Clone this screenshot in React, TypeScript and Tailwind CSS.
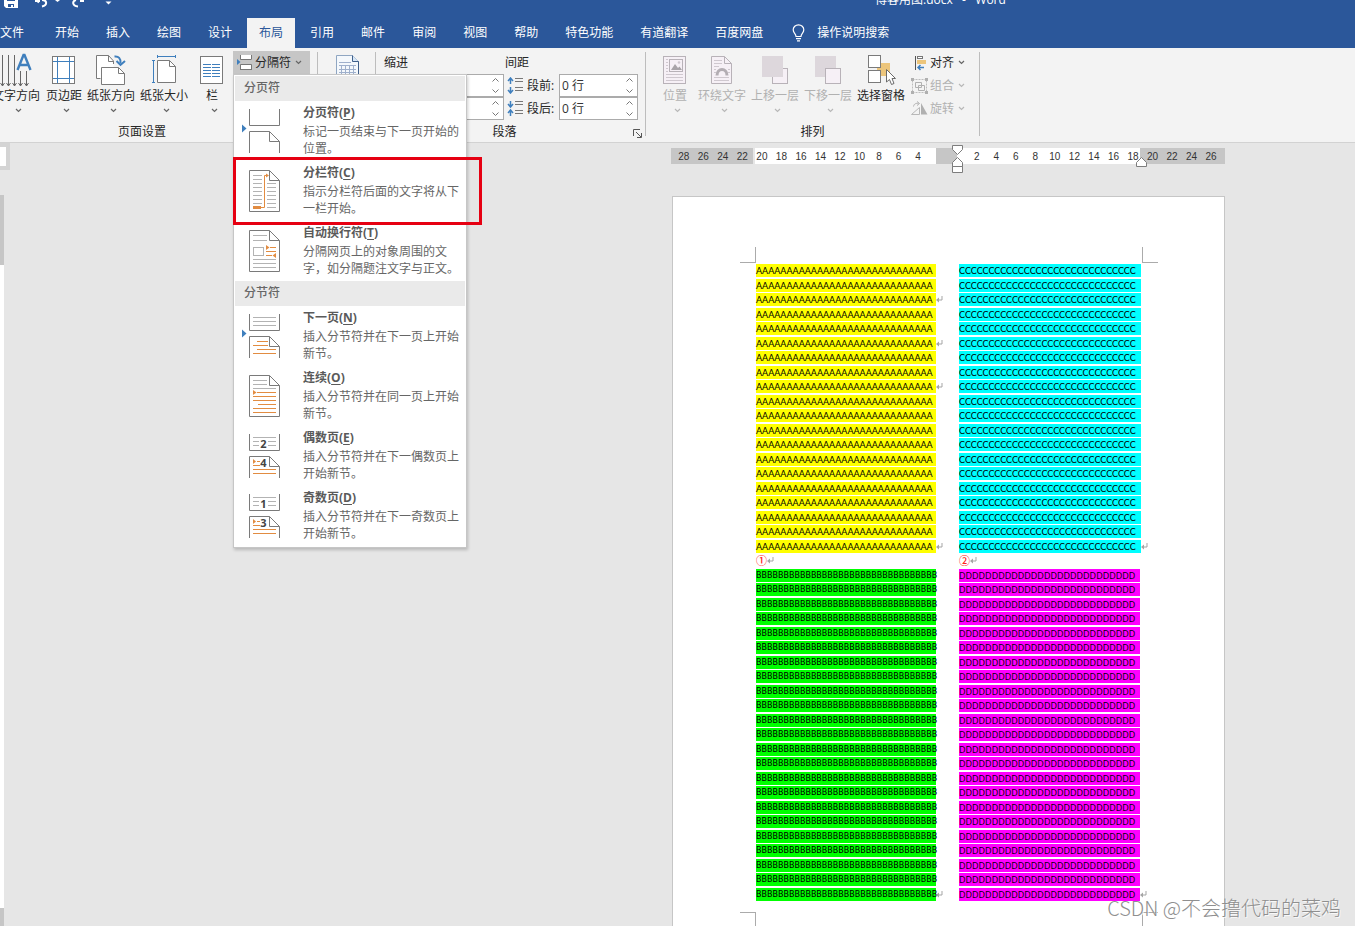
import React from "react";

const tabs = ["文件", "开始", "插入", "绘图", "设计", "布局", "引用", "邮件", "审阅", "视图", "帮助", "特色功能", "有道翻译", "百度网盘"];

const INK = "#7a7a7a";
const PALE = "#b8b2b8";
const BLUE = "#3f7fbd";
const ORANGE = "#e28c41";

function Chevron({ pale = false }: { pale?: boolean }) {
  return (
    <svg width="7" height="5" viewBox="0 0 7 5" fill="none" stroke={pale ? "#b8b8b8" : "#666"} strokeWidth="1.2" aria-hidden="true">
      <path d="M1 1l2.5 2.5L6 1" />
    </svg>
  );
}

function Svg({ w = 34, h = 34, children }: { w?: number; h?: number; children: React.ReactNode }) {
  return (
    <svg width={w} height={h} viewBox={`0 0 ${w} ${h}`} fill="none" aria-hidden="true" className="shrink-0">
      {children}
    </svg>
  );
}

/* ---------- large ribbon icons ---------- */

const TextDirectionIcon = () => (
  <Svg>
    <path d="M3.5 2v31M9.5 2v31M15.5 2v31M21.5 18v15M27.5 18v15" stroke="#666" />
    <path d="M1.500 30l2 3 2-3M7.500 30l2 3 2-3M13.500 30l2 3 2-3M19.500 30l2 3 2-3M25.500 30l2 3 2-3" stroke="#666" />
    <path d="M18.500 17L24.500 2h1L31.500 17M20.500 12h9" stroke={BLUE} strokeWidth="2.400" />
  </Svg>
);
const MarginsIcon = () => (
  <Svg>
    <rect x="5.5" y="3.5" width="22" height="27" fill="#fff" stroke={INK} />
    <path d="M10.5 4v26M22.5 4v26M6 8.5h21M6 25.5h21" stroke={BLUE} />
  </Svg>
);
const OrientationIcon = () => (
  <Svg>
    <path d="M6 25.500H2.500v-23h12l5 6V14H7.500v11.500z" fill="#fff" />
    <path d="M6.500 25.500h-4v-23h12l5 5.500v3M14.500 2.500v6h5" stroke={INK} />
    <path d="M7.500 14.500h17l6 6v11h-23z" fill="#fff" stroke={INK} />
    <path d="M24.500 14.500v6h6" stroke={INK} />
    <path d="M20.500 3.500c4-.5 6.500 2 6 7" stroke={BLUE} strokeWidth="2" />
    <path d="M22.500 8l4 4 4.500-4" stroke={BLUE} strokeWidth="2" />
  </Svg>
);
const SizeIcon = () => (
  <Svg>
    <path d="M10.500 7.500h12l6 6v16h-18z" fill="#fff" stroke={INK} />
    <path d="M22.500 7.500v6h6" stroke={INK} />
    <path d="M10.500 3.500h18M10.500 2v3M28.500 2v3M6.500 7.500v22M5 7.500h3M5 29.500h3" stroke={BLUE} />
  </Svg>
);
const ColumnsIcon = () => (
  <Svg>
    <rect x="5.500" y="3.500" width="22" height="27" fill="#fff" stroke={INK} />
    <path d="M8 11.500h8M8 14.500h8M8 17.500h8M8 20.500h8M8 23.500h8M17 11.500h8M17 14.500h8M17 17.500h8M17 20.500h8M17 23.500h8" stroke={BLUE} />
  </Svg>
);
const ManuscriptIcon = () => (
  <svg width="24" height="30" viewBox="0 0 24 30" fill="none" aria-hidden="true">
    <path d="M.5.5h16l6 6V30H.5z" fill="#f4f8fc" stroke="#8fa6c2" />
    <path d="M16.500.5v6h6" fill="#d7e6f5" stroke="#3f5f8a" />
    <path d="M22.500 6.500V30" stroke="#3f5f8a" />
    <path d="M3 7.500h12M3 10.500h17M3 14.500h17M3 17.500h17M3 21.500h17M3 24.500h17M5.500 10v20M9.500 10v20M13.500 10v20M17.500 10v20" stroke="#9fb0cc" />
  </svg>
);
const PositionIcon = () => (
  <Svg>
    <rect x="5.500" y="3.500" width="22" height="27" fill="#f6f0f6" stroke={PALE} />
    <path d="M8 6.500h2M8 9.500h2M8 12.500h2M8 15.500h2M8 18.500h2M8 21.500h17M8 24.500h17M8 27.500h17" stroke="#cfc8cf" />
    <rect x="11.500" y="6.500" width="13" height="12" fill="#f6f0f6" stroke={PALE} />
    <path d="M13 17l4-6 3 4 1.500-1.500L24 17z" fill="#a9a4a9" />
    <circle cx="21" cy="9.500" r="1.300" fill="#cfc8cf" />
  </Svg>
);
const WrapIcon = () => (
  <Svg>
    <path d="M6.500 3.500h13l7 7v20h-20z" fill="#f6f0f6" stroke={PALE} />
    <path d="M19.500 3.500v7h7" stroke={PALE} />
    <path d="M9 7.500h8M9 10.500h8M9 13.500h5M9 16.500h2M23 16.500h2M9 19.500h2M23 19.500h2M9 24.500h15M9 27.500h15" stroke="#cfc8cf" />
    <path d="M12 22.500c0-8 10-8 10 0" stroke="#b3adb3" strokeWidth="3" />
  </Svg>
);
const ForwardIcon = () => (
  <Svg>
    <rect x="14.500" y="15.500" width="15" height="15" fill="#f6f0f6" stroke={PALE} />
    <path d="M4 3h21v21H4z" fill="#ddd7dc" />
  </Svg>
);
const BackwardIcon = () => (
  <Svg>
    <path d="M4 3h21v21H4z" fill="#ddd7dc" />
    <rect x="14.500" y="15.500" width="15" height="15" fill="#f6f0f6" stroke={PALE} />
  </Svg>
);
const SelectionPaneIcon = () => (
  <Svg>
    <path d="M13 10h13v13H13z" fill="#ecc57b" />
    <rect x="4.500" y="2.500" width="12" height="12" fill="#fff" stroke={INK} />
    <rect x="4.500" y="17.500" width="12" height="12" fill="#fff" stroke={INK} />
    <path d="M22.500 16.500v12.500l3-2.500 2 5 2.500-1-2-5h3.500z" fill="#fff" stroke="#6a6a6a" />
  </Svg>
);

/* ---------- small ribbon icons ---------- */

const BreaksIcon = () => (
  <Svg w={18} h={18}>
    <path d="M5 1h11v5H5zM5 11h11v5H5z" fill="#fff" />
    <path d="M4.500 1v4.500h11V1M4.500 16v-5.500h11V16M5 15.500h11" stroke="#777" />
    <path d="M1 5l3.500 3L1 11z" fill={BLUE} />
  </Svg>
);
const SpaceBeforeIcon = () => (
  <Svg w={16} h={17}>
    <path d="M3.500 1v6M1 4l2.500-3L6 4M3.500 10v6M1 13l2.500 3L6 13" stroke={BLUE} strokeWidth="1.500" />
    <path d="M8 1.500h8M8 4.500h8M8 10.500h8M8 13.500h8" stroke="#777" />
  </Svg>
);
const SpaceAfterIcon = () => (
  <Svg w={16} h={17}>
    <path d="M3.500 1v6M1 4l2.500 3L6 4M3.500 10v6M1 13l2.500-3L6 13" stroke={BLUE} strokeWidth="1.500" />
    <path d="M8 1.500h8M8 4.500h8M8 10.500h8M8 13.500h8" stroke="#777" />
  </Svg>
);
const AlignIcon = () => (
  <Svg w={19} h={16}>
    <path d="M4.500 1v14" stroke="#555" />
    <rect x="6.500" y="1.500" width="5" height="2" fill="#fff" stroke="#777" />
    <path d="M6 5h9v4H6z" fill="#ecc57b" />
    <path d="M13 12.500H7M9.500 10L7 12.500 9.500 15" stroke={BLUE} strokeWidth="1.500" />
  </Svg>
);
const GroupIcon = () => (
  <Svg w={19} h={16}>
    <path d="M1.500 1.500h14v13h-14z" stroke="#bdbdbd" strokeDasharray="2 1" />
    <path d="M4.500 4.500h6v5h-6zM7.500 7.500h6v5h-6z" fill="#f3f3f3" stroke="#b0b0b0" />
    <path d="M0 0h3v3H0zM14 0h3v3h-3zM0 13h3v3H0zM14 13h3v3h-3z" fill="#b0b0b0" />
  </Svg>
);
const RotateIcon = () => (
  <Svg w={19} h={16}>
    <path d="M10 2l6.500 11.500H10z" fill="#b0b0b0" />
    <path d="M8.500 6.500v7h-8z" stroke="#b8b8b8" />
    <path d="M2.500 5.500c.5-3 3-3.500 5-3M6 .5l2.500 2L6 4.500" stroke="#b0b0b0" />
  </Svg>
);

/* ---------- break menu icons, 68 x 60 cells ---------- */

const FullPage = () => (
  <>
    <path d="M14.500 9.500h20l10 10v31h-30z" fill="#fff" stroke={INK} />
    <path d="M34.500 9.500v10h10" stroke={INK} />
  </>
);
const SplitPages = () => <path d="M14.500 8v16.500h30V8M14.500 52V30.500h20l10 10V52M34.500 30.500v10h10" stroke={INK} />;
const Pointer = () => <path d="M7 23.500l4.500 4-4.500 4z" fill={BLUE} />;

const PageBreakIcon = () => (
  <Svg w={68} h={60}><SplitPages /><Pointer /></Svg>
);
const ColumnBreakIcon = () => (
  <Svg w={68} h={60}>
    <FullPage />
    <path d="M18 14.500h9M18 18.500h9M18 22.500h9M18 26.500h9M18 30.500h9M18 34.500h9M18 38.500h9M18 42.500h9M32 22.500h9M32 26.500h9M32 30.500h9M32 34.500h9M32 38.500h9M32 42.500h9M32 46.500h9" stroke="#b3b3b3" />
    <path d="M18 45h8v3h-8z" fill={ORANGE} />
    <path d="M26 46.500h3.500v-32H32" stroke={ORANGE} />
    <path d="M31 12.500l3 2-3 2z" fill={ORANGE} />
  </Svg>
);
const WrapBreakIcon = () => (
  <Svg w={68} h={60}>
    <FullPage />
    <path d="M18 14.500h14M18 19.500h14M18 38.500h23M18 42.500h23M18 46.500h23" stroke="#b3b3b3" />
    <rect x="18.500" y="26.500" width="10" height="8" stroke="#b3b3b3" />
    <path d="M35 26.500h6M31 30.500h10M31 34.500h6" stroke={ORANGE} />
    <path d="M31 24l3.500 2.500L31 29zM41 32l-3.500 2.500L41 37z" fill={ORANGE} />
  </Svg>
);
const NextPageIcon = () => (
  <Svg w={68} h={60}>
    <SplitPages /><Pointer />
    <path d="M18 11.500h23M18 15.500h23M18 19.500h23" stroke="#b3b3b3" />
    <path d="M22 35.500h11M18 39.500h15M22 43.500h19M18 47.500h23" stroke={ORANGE} />
  </Svg>
);
const ContinuousIcon = () => (
  <Svg w={68} h={60}>
    <FullPage />
    <path d="M18 14.500h14M18 18.500h14M18 22.500h23" stroke="#b3b3b3" />
    <path d="M22 26.500h19M18 30.500h23M18 34.500h23M23 38.500h18M18 42.500h23M18 46.500h23" stroke={ORANGE} />
    <path d="M18 24l3.500 2.500L18 29z" fill={ORANGE} />
  </Svg>
);
const NumberedIcon = ({ top, bottom }: { top: string; bottom: string }) => (
  <Svg w={68} h={60}>
    <SplitPages />
    <path d="M18 11.500h23M18 15.500h6M33 15.500h8M18 19.500h6M33 19.500h8" stroke="#b3b3b3" />
    <path d="M22 35.500h3M18 39.500h7M18 43.500h23M18 47.500h23" stroke={ORANGE} />
    <path d="M18 33l3 2.500-3 2.500z" fill={ORANGE} />
    <g fill="#444" fontFamily="Open Sans" fontWeight="700" fontSize="11" textAnchor="middle">
      <text x="28.500" y="22">{top}</text>
      <text x="28.500" y="41">{bottom}</text>
    </g>
  </Svg>
);

const pageBreaks = [
  { icon: <PageBreakIcon />, title: "分页符", k: "P", lines: ["标记一页结束与下一页开始的", "位置。"] },
  { icon: <ColumnBreakIcon />, title: "分栏符", k: "C", lines: ["指示分栏符后面的文字将从下", "一栏开始。"], marked: true },
  { icon: <WrapBreakIcon />, title: "自动换行符", k: "T", lines: ["分隔网页上的对象周围的文", "字，如分隔题注文字与正文。"] },
];
const sectionBreaks = [
  { icon: <NextPageIcon />, title: "下一页", k: "N", lines: ["插入分节符并在下一页上开始", "新节。"] },
  { icon: <ContinuousIcon />, title: "连续", k: "O", lines: ["插入分节符并在同一页上开始", "新节。"] },
  { icon: <NumberedIcon top="2" bottom="4" />, title: "偶数页", k: "E", lines: ["插入分节符并在下一偶数页上", "开始新节。"] },
  { icon: <NumberedIcon top="1" bottom="3" />, title: "奇数页", k: "D", lines: ["插入分节符并在下一奇数页上", "开始新节。"] },
];

type BreakItem = { icon: React.ReactNode; title: string; k: string; lines: string[]; marked?: boolean };

function MenuSection({ heading, items }: { heading: string; items: BreakItem[] }) {
  return (
    <section>
      <h3 className="h-[25px] bg-[#eaeaea] pl-[9px] leading-6 font-medium text-[#666]">{heading}</h3>
      {items.map((it) => (
        <button key={it.k} type="button" className="relative flex h-[60px] w-full text-left">
          {it.icon}
          <span className="block pt-[3px] whitespace-nowrap">
            <span className="block pb-px leading-[18px] font-bold text-[#5a5a5a]">
              {it.title}(<u className="underline-offset-2">{it.k}</u>)
            </span>
            {it.lines.map((l) => (
              <span key={l} className="block leading-[17px] text-[#666]">{l}</span>
            ))}
          </span>
          {it.marked && <span className="absolute -top-1 -left-0.5 z-10 h-[68px] w-[249px] border-3 border-[#e60012]" />}
        </button>
      ))}
    </section>
  );
}

function LargeButton({ icon, label, width, pale = false, arrow = true }: { icon: React.ReactNode; label: string; width: string; pale?: boolean; arrow?: boolean }) {
  return (
    <button type="button" disabled={pale} className={`flex flex-col items-center pt-[5px] ${width} ${pale ? "text-[#b1b1b1]" : "text-[#262626]"}`}>
      {icon}
      <span className="leading-[18px] whitespace-nowrap">{label}</span>
      <span className="flex h-2.5 items-center pl-1">{arrow && <Chevron pale={pale} />}</span>
    </button>
  );
}

function SmallButton({ icon, label, pale = false }: { icon: React.ReactNode; label: string; pale?: boolean }) {
  return (
    <button type="button" disabled={pale} className={`flex h-[23px] items-center ${pale ? "text-[#b1b1b1]" : "text-[#262626]"}`}>
      {icon}
      <span className="mr-1 whitespace-nowrap">{label}</span>
      <Chevron pale={pale} />
    </button>
  );
}

function Spinner({ id, value, label }: { id: string; value: string; label?: string }) {
  return (
    <div className="flex h-[23px] w-[79px] items-center border border-[#ababab] bg-white pr-[3px]">
      <input id={id} aria-label={label} defaultValue={value} className="w-full min-w-0 flex-1 bg-transparent pl-0.5 text-[#333] outline-none" />
      <svg width="9" height="17" viewBox="0 0 9 17" fill="none" stroke="#777" aria-hidden="true">
        <path d="M1.500 4.500l3-3 3 3M1.500 12.500l3 3 3-3" />
      </svg>
    </div>
  );
}

const Divider = () => <div className="my-1 mb-1.5 w-px shrink-0 bg-[#bdbdbd]" />;

function GroupLabel({ children, launcher = false }: { children?: React.ReactNode; launcher?: boolean }) {
  return (
    <div className="flex h-[19px] items-start text-[#262626]">
      <span className="flex-1 text-center leading-[18px]">{children}</span>
      {launcher && (
        <button type="button" aria-label="段落设置" className="flex h-4 w-3 items-center pt-1">
          <svg width="9" height="9" viewBox="0 0 9 9" fill="none" stroke="#555" aria-hidden="true">
            <path d="M.5 7V.5H7M3 3l5 5M8.500 4v4.500H4" />
          </svg>
        </button>
      )}
    </div>
  );
}

/* ---------- document ---------- */

const ReturnMark = () => (
  <svg width="7" height="13" viewBox="0 0 7 13" fill="none" className="shrink-0" aria-hidden="true">
    <path d="M6 3v4H2" stroke="#a5a5a5" />
    <path d="M0 7l3-2.500v5z" fill="#a5a5a5" />
  </svg>
);

type Block = { letter: string; count: number; rows: number; ends: number[]; look: string };

function Lines({ letter, count, rows, ends, look }: Block) {
  return (
    <>
      {Array.from({ length: rows }, (_, i) => (
        <div key={i} className="flex min-w-0 items-start">
          <mark className={`h-[13px] shrink-0 leading-[13px] whitespace-nowrap text-black ${look}`}>{letter.repeat(count)}</mark>
          {ends.includes(i + 1) && <ReturnMark />}
        </div>
      ))}
    </>
  );
}

function TextColumn({ first, mark, second }: { first: Block; mark: string; second: Block }) {
  return (
    <div className="grid h-[638px] auto-rows-fr grid-cols-1">
      <Lines {...first} />
      <div className="flex min-w-0 items-start">
        <span className="font-['Noto_Sans_CJK_SC',sans-serif] text-[11px] leading-[13px] font-medium text-[#ff2020]">{mark}</span>
        <ReturnMark />
      </div>
      <Lines {...second} />
    </div>
  );
}

const rulerLabels = ["28", "26", "24", "22", "20", "18", "16", "14", "12", "10", "8", "6", "4", "", "", "2", "4", "6", "8", "10", "12", "14", "16", "18", "20", "22", "24", "26"];

export default function App() {
  return (
    <div className="flex h-screen flex-col overflow-hidden bg-[#e6e6e6] font-['Open_Sans','Noto_Sans_CJK_SC',sans-serif] text-xs">
      <header className="shrink-0 bg-[#2b579a] text-white">
        <div className="flex h-[18px] items-start overflow-hidden">
          <svg width="120" height="14" viewBox="0 0 120 14" fill="none" aria-hidden="true">
            <path d="M4 0h14v8H6L4 6z" fill="#fff" />
            <path d="M7 0h8v1H7zM8 4h6v3h-1V5h-2v2H8z" fill="#2b579a" />
            <path d="M35 1h5M36 0l3 2.500M42 0c5 0 6 5 0 6.500" stroke="#fff" strokeWidth="2" />
            <path d="M55 0h5l-2.500 2z" fill="#fff" />
            <path d="M78 6.500C72 6 72 1 76 0M80 1h4" stroke="#fff" strokeWidth="2" />
            <path d="M105.500 1.500h6l-3 3z" fill="#fff" />
          </svg>
          <span className="-mt-2 ml-[755px] leading-4 whitespace-pre">博客用图.docx   -   Word</span>
        </div>
        <nav className="flex h-[30px] gap-[3px] whitespace-nowrap">
          {tabs.map((t, i) => (
            <button
              key={t}
              type="button"
              className={`${i === 0 ? "pr-4" : "px-3"} ${t === "布局" ? "bg-[#f3f3f3] text-[#2b579a]" : ""}`}
            >
              {t}
            </button>
          ))}
          <button type="button" className="flex items-center gap-3 pl-3.5">
            <svg width="13" height="18" viewBox="0 0 13 18" fill="none" stroke="#fff" strokeWidth="1.200" aria-hidden="true">
              <path d="M4 12.500C4 9.500 1.200 9 1.200 5.800a5.300 5 0 0 1 10.600 0C11.800 9 9 9.500 9 12.500zM4 14.700h5M5 16.900h3" />
            </svg>
            操作说明搜索
          </button>
        </nav>
      </header>

      <div className="relative z-10 flex h-[95px] shrink-0 border-b border-[#d2d2d2] bg-[#f3f3f3]">
        <div className="-ml-[33px] flex flex-col justify-between">
          <div className="flex pl-[22px]">
            <LargeButton icon={<TextDirectionIcon />} label="文字方向" width="w-[54px]" />
            <LargeButton icon={<MarginsIcon />} label="页边距" width="w-[42px]" />
            <LargeButton icon={<OrientationIcon />} label="纸张方向" width="w-[52px]" />
            <LargeButton icon={<SizeIcon />} label="纸张大小" width="w-[54px]" />
            <LargeButton icon={<ColumnsIcon />} label="栏" width="w-[42px]" />
            <div className="relative w-[84px] pt-[3px]">
              <button type="button" aria-expanded="true" className="flex h-[23px] w-[77px] items-center bg-[#c6c6c6] pl-[3px] text-[#262626]">
                <BreaksIcon />
                <span className="mr-1 ml-px whitespace-nowrap">分隔符</span>
                <Chevron />
              </button>
              <div className="absolute top-[26px] left-0 w-[234px] border border-[#c6c6c6] bg-white p-px shadow-[1px_2px_3px_rgba(0,0,0,0.2)]">
                <MenuSection heading="分页符" items={pageBreaks} />
                <MenuSection heading="分节符" items={sectionBreaks} />
              </div>
            </div>
          </div>
          <GroupLabel>页面设置</GroupLabel>
        </div>
        <Divider />
        <div className="w-[57px] pt-[7px] pl-[18px]">
          <ManuscriptIcon />
        </div>
        <Divider />
        <div className="flex flex-col justify-between">
          <div className="flex pt-[3px] pr-[7px] pl-2 text-[#262626]">
            <div className="flex w-[120px] flex-col">
              <span className="h-[23px] leading-6">缩进</span>
              <div className="flex flex-col items-end">
                <Spinner id="indent-left" value="" label="左缩进" />
                <Spinner id="indent-right" value="" label="右缩进" />
              </div>
            </div>
            <div>
              <span className="block h-[23px] pl-px leading-6">间距</span>
              <div className="flex items-center gap-1 pl-[3px]">
                <SpaceBeforeIcon />
                <label htmlFor="space-before" className="w-7 whitespace-nowrap">段前:</label>
                <Spinner id="space-before" value="0 行" />
              </div>
              <div className="flex items-center gap-1 pl-[3px]">
                <SpaceAfterIcon />
                <label htmlFor="space-after" className="w-7 whitespace-nowrap">段后:</label>
                <Spinner id="space-after" value="0 行" />
              </div>
            </div>
          </div>
          <GroupLabel launcher>段落</GroupLabel>
        </div>
        <Divider />
        <div className="flex flex-col justify-between">
          <div className="flex pr-3.5 pl-[9px]">
            <LargeButton icon={<PositionIcon />} label="位置" width="w-10" pale />
            <LargeButton icon={<WrapIcon />} label="环绕文字" width="w-[54px]" pale />
            <LargeButton icon={<ForwardIcon />} label="上移一层" width="w-[52px]" pale />
            <LargeButton icon={<BackwardIcon />} label="下移一层" width="w-[54px]" pale />
            <LargeButton icon={<SelectionPaneIcon />} label="选择窗格" width="w-[52px]" arrow={false} />
            <div className="flex flex-col pt-[3px] pl-1">
              <SmallButton icon={<AlignIcon />} label="对齐" />
              <SmallButton icon={<GroupIcon />} label="组合" pale />
              <SmallButton icon={<RotateIcon />} label="旋转" pale />
            </div>
          </div>
          <GroupLabel>排列</GroupLabel>
        </div>
        <Divider />
      </div>

      <main className="relative flex min-h-0 flex-1">
        <aside className="flex w-2.5 shrink-0 flex-col">
          <div className="h-[27px] border-4 border-l-0 border-[#d4d4d4] bg-white" />
          <div className="mt-[25px] h-[70px] w-1 bg-[#c6c6c6]" />
          <div className="w-1 flex-1 bg-white" />
          <div className="h-[18px] w-1 bg-[#c6c6c6]" />
        </aside>

        <div className="ml-[661px] w-[554px] shrink-0 pt-[5px]">
          <div className="relative flex h-4 bg-[linear-gradient(to_right,#c6c6c6_82px,#e6e6e6_82px,#e6e6e6_84px,#fff_84px,#fff_265px,#c6c6c6_265px,#c6c6c6_286px,#fff_286px,#fff_469px,#c6c6c6_469px)] pr-1 pl-[3px] font-['Liberation_Sans',sans-serif] text-[10px] leading-[18px] text-[#333]">
            {rulerLabels.map((n, i) => (
              <span key={i} className="flex-1 text-center">{n}</span>
            ))}
            <svg width="12" height="29" viewBox="0 0 12 29" fill="#fff" stroke="#7d7d7d" className="absolute -top-[3px] left-[281px]" aria-hidden="true">
              <path d="M.5.5h10v4l-5 5-5-5zM.5 21.500v-4l5-5 5 5v4zM.5 21.500h10v6H.5z" />
            </svg>
            <svg width="12" height="11" viewBox="0 0 12 11" fill="#fff" stroke="#7d7d7d" className="absolute top-[9px] left-[465px]" aria-hidden="true">
              <path d="M.5 9.500v-4l5-5 5 5v4z" />
            </svg>
          </div>

          <article className="mt-8 ml-px h-[900px] border border-[#c6c6c6] bg-white pt-[50px]">
            <div className="flex h-4 justify-between pr-[66px] pl-[67px]">
              <span className="w-4 border-r border-b border-[#ababab]" />
              <span className="w-4 border-b border-l border-[#ababab]" />
            </div>
            <div className="mt-px grid grid-cols-[180px_182px] gap-x-[23px] pl-[83px]">
              <TextColumn
                first={{ letter: "A", count: 29, rows: 20, ends: [3, 6, 9, 20], look: "w-[180px] bg-[#ffff00] font-['Lato',sans-serif] text-[9px]" }}
                mark="①"
                second={{ letter: "B", count: 33, rows: 23, ends: [23], look: "w-[180px] bg-[#00ff00] font-['DejaVu_Sans',sans-serif] text-[8px]" }}
              />
              <TextColumn
                first={{ letter: "C", count: 30, rows: 20, ends: [20], look: "w-[182px] bg-[#00ffff] font-['Lato',sans-serif] text-[9px]" }}
                mark="②"
                second={{ letter: "D", count: 27, rows: 23, ends: [23], look: "w-[181px] bg-[#ff00ff] font-['Open_Sans',sans-serif] text-[9px]" }}
              />
            </div>
            <div className="mt-2.5 flex h-4 justify-between pr-[66px] pl-[67px]">
              <span className="w-4 border-t border-r border-[#ababab]" />
              <span className="w-4 border-t border-l border-[#ababab]" />
            </div>
          </article>
        </div>

        <p className="absolute right-3.5 bottom-1 font-['Noto_Sans_CJK_SC',sans-serif] text-xl leading-7 font-light whitespace-nowrap text-[#8f8f8f] [text-shadow:1px_1px_0_rgba(255,255,255,0.8)]">
          CSDN @不会撸代码的菜鸡
        </p>
      </main>
    </div>
  );
}
